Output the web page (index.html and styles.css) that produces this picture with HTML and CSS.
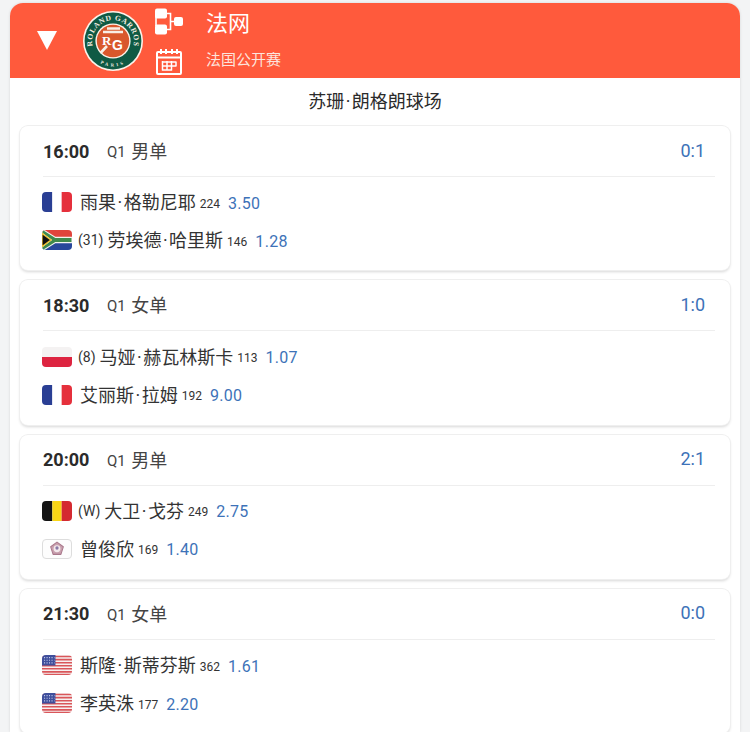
FILE: index.html
```html
<!DOCTYPE html>
<html lang="zh-CN">
<head>
<meta charset="utf-8">
<title>法网</title>
<link rel="stylesheet" href="styles.css">
</head>
<body>
<svg class="defs" width="0" height="0" aria-hidden="true">
  <defs>
    <symbol id="fr" viewBox="0 0 29 19" preserveAspectRatio="none">
      <rect width="10" height="19" fill="#2a3f94"/><rect x="10" width="9" height="19" fill="#fff"/><rect x="19" width="10" height="19" fill="#e5303c"/>
    </symbol>
    <symbol id="za" viewBox="0 0 29 19" preserveAspectRatio="none">
      <rect width="29" height="9.5" fill="#e0443c"/><rect y="9.5" width="29" height="9.5" fill="#28479b"/>
      <path d="M0 -1 L13 7 H29 V12 H13 L0 20 V16 L9 9.5 L0 3 Z" fill="#3f8a4c" stroke="#f4f4f0" stroke-width="1"/>
      <path d="M0 3.2 L8.6 9.5 L0 15.8 Z" fill="#111" stroke="#f2c230" stroke-width="1.2"/>
    </symbol>
    <symbol id="pl" viewBox="0 0 29 19" preserveAspectRatio="none">
      <rect width="29" height="9.5" fill="#f4f2f2"/><rect y="9.5" width="29" height="9.5" fill="#dd2440"/>
    </symbol>
    <symbol id="be" viewBox="0 0 29 19" preserveAspectRatio="none">
      <rect width="10" height="19" fill="#141414"/><rect x="10" width="9" height="19" fill="#f9d616"/><rect x="19" width="10" height="19" fill="#d42a30"/>
    </symbol>
    <symbol id="tpe" viewBox="0 0 29 19" preserveAspectRatio="none">
      <rect width="29" height="19" fill="#fdfdfd"/>
      <path d="M14.5 3 L20.6 7.4 L18.3 14.6 H10.7 L8.4 7.4 Z" fill="#c9a0ae" stroke="#a9788c" stroke-width="1" stroke-linejoin="round"/>
      <circle cx="14.5" cy="9.3" r="3.3" fill="#f4e9ec"/><circle cx="14.5" cy="8.6" r="1.6" fill="#8a7aa6"/>
    </symbol>
    <symbol id="us" viewBox="0 0 29 19" preserveAspectRatio="none">
      <rect width="29" height="19" fill="#f6f0f0"/>
      <path d="M0 1.5H29M0 4.4H29M0 7.3H29M0 10.2H29M0 13.1H29M0 16H29M0 18.5H29" stroke="#d9565a" stroke-width="1.5"/>
      <rect width="13" height="10" fill="#3f4f9c"/>
      <path d="M2 2.5H12M2 5H12M2 7.5H12" stroke="#c8cdec" stroke-width="1" stroke-dasharray="1 1.4"/>
    </symbol>
  </defs>
</svg>
<main class="panel">
  <header class="hero">
    <span class="arrow"></span>
    <svg class="logo" viewBox="0 0 60 60" role="img" aria-label="Roland Garros">
      <defs>
        <path id="arcTop" d="M12 40.5 A20.8 20.8 0 1 1 48 40.5"/>
        <path id="arcBottom" d="M14 49.8 A25.5 25.5 0 0 0 46 49.8"/>
      </defs>
      <circle cx="30" cy="30" r="30" fill="#fbf3ea"/>
      <circle cx="30" cy="30" r="28.4" fill="#0f5a44"/>
      <circle cx="30" cy="30" r="17.6" fill="#fbf3ea"/>
      <circle cx="30" cy="30" r="16.2" fill="#d9582c"/>
      <path d="M20 21 H40 M24 17.5 H37 M17.5 42 L24 35" stroke="#f8eee4" stroke-width="2.6" fill="none"/>
      <text x="19" y="34" class="logo-r">R</text>
      <text x="29" y="39" class="logo-g">G</text>
      <text class="logo-ring"><textPath href="#arcTop" startOffset="50%">ROLAND GARROS</textPath></text>
      <text class="logo-paris"><textPath href="#arcBottom" startOffset="50%">PARIS</textPath></text>
    </svg>
    <div class="tools">
      <svg class="tool" viewBox="0 0 28 28" aria-hidden="true">
        <rect x="0" y="0.5" width="12" height="10" rx="2" fill="#fff"/>
        <rect x="0" y="16.5" width="12" height="10" rx="2" fill="#fff"/>
        <rect x="19" y="9" width="9" height="9" rx="2" fill="#fff"/>
        <path d="M1 8V18M12 5.5H15.5V21.5H12M15.5 13.5H19" fill="none" stroke="#fff" stroke-width="1.6"/>
      </svg>
      <svg class="tool" viewBox="0 0 28 28" aria-hidden="true">
        <rect x="2" y="5" width="24" height="22" rx="1" fill="none" stroke="#fff" stroke-width="2"/>
        <path d="M2 10.5H26" stroke="#fff" stroke-width="2"/>
        <path d="M6 2V7M11 2V7M17 2V7M22 2V7" stroke="#fff" stroke-width="2"/>
        <path d="M7 15H21M7 19H21M7 23H17M7.5 14V23.5M12 14V23.5M16.5 14V23.5M21 14.5V19.5" stroke="#fff" stroke-width="1.5" fill="none"/>
      </svg>
    </div>
    <div class="titles">
      <div class="title">法网</div>
      <div class="subtitle">法国公开赛</div>
    </div>
  </header>
  <h2 class="venue">苏珊<span class="dot">·</span>朗格朗球场</h2>
  <section class="list">
    <article class="card">
      <div class="head"><span class="time">16:00</span><span class="round"><span class="q">Q1</span> 男单</span><span class="score">0:1</span></div>
      <div class="row"><svg class="flag"><use href="#fr"/></svg><span class="name">雨果<span class="dot">·</span>格勒尼耶</span><span class="rank">224</span><span class="odds">3.50</span></div>
      <div class="row"><svg class="flag"><use href="#za"/></svg><span class="seed">(31)</span><span class="name">劳埃德<span class="dot">·</span>哈里斯</span><span class="rank">146</span><span class="odds">1.28</span></div>
    </article>
    <article class="card">
      <div class="head"><span class="time">18:30</span><span class="round"><span class="q">Q1</span> 女单</span><span class="score">1:0</span></div>
      <div class="row"><svg class="flag"><use href="#pl"/></svg><span class="seed">(8)</span><span class="name">马娅<span class="dot">·</span>赫瓦林斯卡</span><span class="rank">113</span><span class="odds">1.07</span></div>
      <div class="row"><svg class="flag"><use href="#fr"/></svg><span class="name">艾丽斯<span class="dot">·</span>拉姆</span><span class="rank">192</span><span class="odds">9.00</span></div>
    </article>
    <article class="card">
      <div class="head"><span class="time">20:00</span><span class="round"><span class="q">Q1</span> 男单</span><span class="score">2:1</span></div>
      <div class="row"><svg class="flag"><use href="#be"/></svg><span class="seed">(W)</span><span class="name">大卫<span class="dot">·</span>戈芬</span><span class="rank">249</span><span class="odds">2.75</span></div>
      <div class="row"><svg class="flag flag-line"><use href="#tpe"/></svg><span class="name">曾俊欣</span><span class="rank">169</span><span class="odds">1.40</span></div>
    </article>
    <article class="card">
      <div class="head"><span class="time">21:30</span><span class="round"><span class="q">Q1</span> 女单</span><span class="score">0:0</span></div>
      <div class="row"><svg class="flag"><use href="#us"/></svg><span class="name">斯隆<span class="dot">·</span>斯蒂芬斯</span><span class="rank">362</span><span class="odds">1.61</span></div>
      <div class="row"><svg class="flag"><use href="#us"/></svg><span class="name">李英洙</span><span class="rank">177</span><span class="odds">2.20</span></div>
    </article>
  </section>
</main>
</body>
</html>
```
FILE: styles.css
```css
* { box-sizing: border-box; }
html, body { margin: 0; height: 732px; overflow: hidden; }
body {
  background: #f3f4f5;
  padding: 3px 10px 0;
  font-family: Roboto, "Noto Sans CJK SC", sans-serif;
  color: #2b2b2b;
}
.defs { position: absolute; }
.panel {
  background: #fff;
  border-radius: 13px 13px 0 0;
  height: 729px;
  overflow: hidden;
  box-shadow: 0 0 3px rgba(0,0,0,.12);
}
.hero {
  height: 75px;
  background: #ff5a3c;
  display: flex;
  align-items: center;
  color: #fff;
}
.arrow {
  width: 0;
  height: 0;
  margin-left: 27px;
  border-left: 10px solid transparent;
  border-right: 10px solid transparent;
  border-top: 19px solid #fff;
}
.logo { width: 60px; height: 60px; margin-left: 26px; margin-top: 1px; flex: none; }
.logo-r { font: 700 13px "Liberation Serif", serif; fill: #fff; }
.logo-g { font: 700 14px "Liberation Sans", sans-serif; fill: #fff; }
.logo-ring { font: 700 7.6px "Liberation Serif", serif; fill: #f3ece0; text-anchor: middle; letter-spacing: .6px; }
.logo-paris { font: 700 4.6px "Liberation Serif", serif; fill: #f3ece0; text-anchor: middle; letter-spacing: 2.6px; }
.tools { display: flex; flex-direction: column; gap: 11px; margin-left: 12px; margin-top: 2px; }
.tool { width: 28px; height: 28px; display: block; }
.titles { margin-left: 23px; display: flex; flex-direction: column; gap: 12px; margin-top: -1px; }
.title { font-size: 22px; line-height: 28px; }
.subtitle { font-size: 15px; line-height: 20px; color: #fde4dd; }
.venue {
  margin: 0;
  height: 48px;
  line-height: 48px;
  text-align: center;
  font-size: 18px;
  font-weight: 400;
}
.dot { margin: 0 1.5px; }
.list { padding: 0 10px; display: flex; flex-direction: column; gap: 10px; }
.card {
  height: 144.3px;
  flex: none;
  background: #fff;
  border-radius: 8px;
  box-shadow: 0 0 0 1px #efefef, 0 2px 3px rgba(0,0,0,.16);
  padding: 0 15px 0 23px;
}
.head {
  height: 51px;
  display: flex;
  align-items: center;
  border-bottom: 1px solid #eeeeee;
  margin-bottom: 6.4px;
  font-size: 18px;
  padding-bottom: 2px;
}
.time { font-weight: 700; width: 64px; margin-top: 2px; }
.round { color: #444; word-spacing: 1px; }
.q { font-size: 15px; vertical-align: 1px; }
.score { margin-left: auto; margin-right: 10px; color: #3d72b8; }
.row { height: 38px; display: flex; align-items: center; }
.name { font-size: 18px; color: #333; margin-bottom: 2px; }
.flag { width: 30px; height: 20px; border-radius: 4px; margin-left: -1px; margin-right: 8px; flex: none; }
.flag-line { outline: 1.5px solid #ddd; outline-offset: -1.5px; }
.seed { font-size: 14px; margin-left: -2px; margin-right: 4px; color: #333; }
.rank { font-size: 12px; margin-left: 4px; margin-top: 3px; color: #333; }
.odds { font-size: 16px; margin-left: 8px; margin-top: 2px; color: #3d72b8; letter-spacing: .3px; }
```
